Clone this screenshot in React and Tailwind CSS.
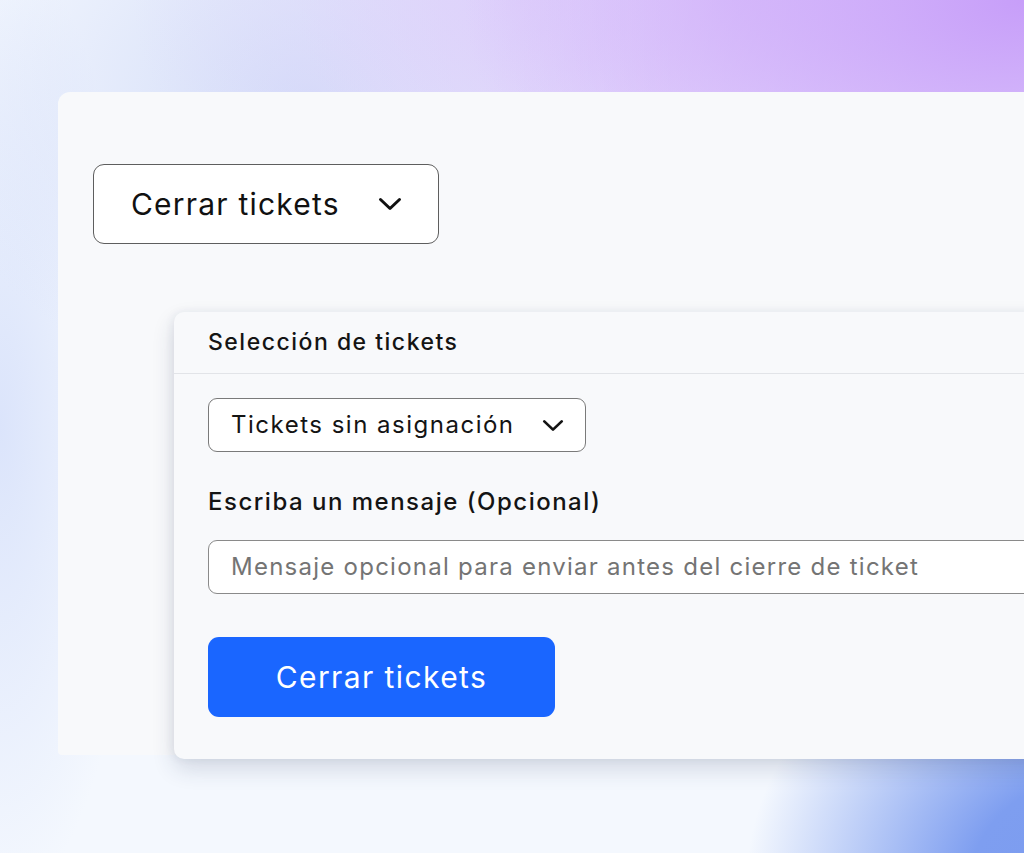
const Chevron = ({ className }) => (
  <svg viewBox="0 0 24 14" className={className} fill="none" stroke="currentColor" strokeWidth="3" strokeLinecap="round" strokeLinejoin="round">
    <path d="M2.5 2.5 L12 11.5 L21.5 2.5" />
  </svg>
);

const SeleccionCard = () => {
  return (
    <div className="mt-[68px] ml-[81px] w-[1000px] bg-[#f8f9fb] rounded-[10px] shadow-[0_10px_22px_rgba(40,50,90,0.16),-2px_0_8px_rgba(40,50,90,0.06)] pb-[42px]">
      <div className="h-[62px] flex items-center pl-[34px] border-b border-[#e2e4e8] text-[23px] font-medium text-[#141414] tracking-[1.5px]">
        Selección de tickets
      </div>
      <div className="pl-[34px]">
        <div className="mt-[24px] w-[378px] h-[54px] bg-white border border-[#7a7a7a] rounded-[9px] flex items-center justify-between pl-[22px] pr-[21px]">
          <span className="text-[24px] text-[#141414] tracking-[1.5px]">Tickets sin asignación</span>
          <Chevron className="w-[22px] h-[13px] text-[#141414]" />
        </div>
        <div className="mt-[35px] h-[30px] flex items-center text-[24px] font-medium text-[#141414] tracking-[1.5px]">
          Escriba un mensaje (Opcional)
        </div>
        <div className="mt-[23px] w-[900px] h-[54px] bg-white border border-[#8a8a8a] rounded-[9px] flex items-center pl-[22px]">
          <span className="text-[24px] text-[#747474] tracking-[1.25px]">
            Mensaje opcional para enviar antes del cierre de ticket
          </span>
        </div>
        <button className="mt-[43px] w-[347px] h-[80px] bg-[#1a66ff] rounded-[11px] text-white text-[30px] tracking-[1.4px]">
          Cerrar tickets
        </button>
      </div>
    </div>
  );
};

export default function App() {
  return (
    <div className="relative w-[1024px] h-[853px] overflow-hidden font-['Inter',sans-serif] bg-[#f4f8fe] bg-[radial-gradient(ellipse_560px_340px_at_100%_0%,#c79ef9_0%,rgba(205,170,250,0.7)_45%,transparent_100%),radial-gradient(ellipse_440px_260px_at_72%_0%,#dfcbfb_0%,transparent_100%),radial-gradient(ellipse_380px_260px_at_50%_0%,#ddd6fb_0%,transparent_100%),radial-gradient(ellipse_380px_300px_at_30%_12%,#d3dcf8_0%,transparent_100%),radial-gradient(ellipse_140px_480px_at_0%_50%,#dbe4fb_0%,transparent_100%),radial-gradient(ellipse_360px_300px_at_108%_104%,#7b9bef_0%,#7e9ef0_38%,transparent_100%)]">
      <div className="ml-[58px] mt-[92px] w-[1000px] h-[663px] bg-[#f8f9fb] rounded-tl-[12px] rounded-bl-[4px] pt-[72px] pl-[35px]">
        <div className="w-[346px] h-[80px] bg-white border border-[#5e5e5e] rounded-[11px] flex items-center pl-[37px] gap-[38px]">
          <span className="text-[30px] text-[#111] tracking-[1.2px]">Cerrar tickets</span>
          <Chevron className="w-[24px] h-[14px] text-[#111]" />
        </div>
        <SeleccionCard />
      </div>
    </div>
  );
}
